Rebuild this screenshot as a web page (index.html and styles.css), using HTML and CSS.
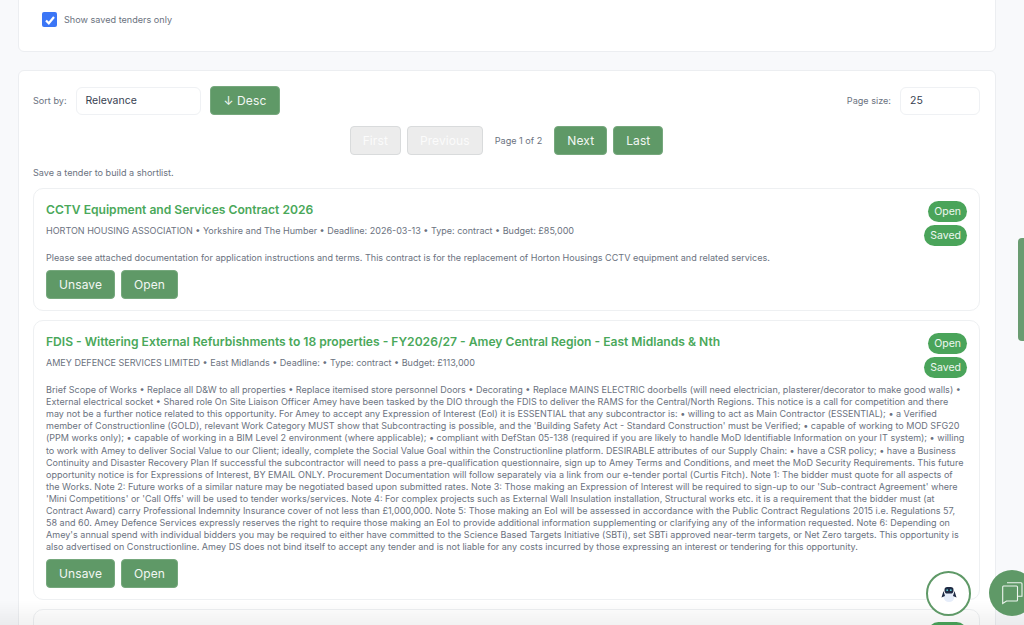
FILE: index.html
```html
<!DOCTYPE html>
<html lang="en">
<head>
    <meta charset="UTF-8">
    <meta name="viewport" content="width=device-width, initial-scale=1.0">
    <title>Tenders</title>
    <link rel="stylesheet" href="styles.css">
</head>
<body>
<div class="container">
    <div class="panel filter-panel">
        <label class="saved-only">
            <span class="checkbox">
                <svg width="12" height="12" viewBox="0 0 12 12"><path d="M2 6.500l2.800 2.800L10 3" fill="none" stroke="#fff" stroke-width="2.200"/></svg>
            </span>
            Show saved tenders only
        </label>
    </div>

    <div class="panel results-panel">
        <div class="sort-row">
            <div class="sort-left">
                <span class="field-label">Sort by:</span>
                <div class="select sort-select">Relevance</div>
                <button class="btn sort-btn">↓ Desc</button>
            </div>
            <div class="sort-right">
                <span class="field-label">Page size:</span>
                <div class="select size-select">25</div>
            </div>
        </div>

        <div class="pager">
            <button class="btn disabled">First</button>
            <button class="btn disabled">Previous</button>
            <span class="page-info">Page 1 of 2</span>
            <button class="btn">Next</button>
            <button class="btn">Last</button>
        </div>

        <p class="hint">Save a tender to build a shortlist.</p>

        <div class="tender-card">
            <div class="badges">
                <span class="badge">Open</span>
                <span class="badge">Saved</span>
            </div>
            <h3>CCTV Equipment and Services Contract 2026</h3>
            <p class="meta">HORTON HOUSING ASSOCIATION • Yorkshire and The Humber • Deadline: 2026-03-13 • Type: contract • Budget: £85,000</p>
            <p class="desc">Please see attached documentation for application instructions and terms. This contract is for the replacement of Horton Housings CCTV equipment and related services.</p>
            <div class="actions">
                <button class="btn">Unsave</button>
                <button class="btn">Open</button>
            </div>
        </div>

        <div class="tender-card">
            <div class="badges">
                <span class="badge">Open</span>
                <span class="badge">Saved</span>
            </div>
            <h3>FDIS - Wittering External Refurbishments to 18 properties - FY2026/27 - Amey Central Region - East Midlands &amp; Nth</h3>
            <p class="meta">AMEY DEFENCE SERVICES LIMITED • East Midlands • Deadline: • Type: contract • Budget: £113,000</p>
            <p class="desc">Brief Scope of Works • Replace all D&amp;W to all properties • Replace itemised store personnel Doors • Decorating • Replace MAINS ELECTRIC doorbells (will need electrician, plasterer/decorator to make good walls) • External electrical socket • Shared role On Site Liaison Officer Amey have been tasked by the DIO through the FDIS to deliver the RAMS for the Central/North Regions. This notice is a call for competition and there may not be a further notice related to this opportunity. For Amey to accept any Expression of Interest (EoI) it is ESSENTIAL that any subcontractor is: • willing to act as Main Contractor (ESSENTIAL); • a Verified member of Constructionline (GOLD), relevant Work Category MUST show that Subcontracting is possible, and the 'Building Safety Act - Standard Construction' must be Verified; • capable of working to MOD SFG20 (PPM works only); • capable of working in a BIM Level 2 environment (where applicable); • compliant with DefStan 05-138 (required if you are likely to handle MoD Identifiable Information on your IT system); • willing to work with Amey to deliver Social Value to our Client; ideally, complete the Social Value Goal within the Constructionline platform. DESIRABLE attributes of our Supply Chain: • have a CSR policy; • have a Business Continuity and Disaster Recovery Plan If successful the subcontractor will need to pass a pre-qualification questionnaire, sign up to Amey Terms and Conditions, and meet the MoD Security Requirements. This future opportunity notice is for Expressions of Interest, BY EMAIL ONLY. Procurement Documentation will follow separately via a link from our e-tender portal (Curtis Fitch). Note 1: The bidder must quote for all aspects of the Works. Note 2: Future works of a similar nature may be negotiated based upon submitted rates. Note 3: Those making an Expression of Interest will be required to sign-up to our 'Sub-contract Agreement' where 'Mini Competitions' or 'Call Offs' will be used to tender works/services. Note 4: For complex projects such as External Wall Insulation installation, Structural works etc. it is a requirement that the bidder must (at Contract Award) carry Professional Indemnity Insurance cover of not less than £1,000,000. Note 5: Those making an EoI will be assessed in accordance with the Public Contract Regulations 2015 i.e. Regulations 57, 58 and 60. Amey Defence Services expressly reserves the right to require those making an EoI to provide additional information supplementing or clarifying any of the information requested. Note 6: Depending on Amey's annual spend with individual bidders you may be required to either have committed to the Science Based Targets Initiative (SBTi), set SBTi approved near-term targets, or Net Zero targets. This opportunity is also advertised on Constructionline. Amey DS does not bind itself to accept any tender and is not liable for any costs incurred by those expressing an interest or tendering for this opportunity.</p>
            <div class="actions">
                <button class="btn">Unsave</button>
                <button class="btn">Open</button>
            </div>
        </div>

        <div class="tender-card next-card">
            <div class="badges">
                <span class="badge badge-cut"></span>
            </div>
        </div>
    </div>
</div>

<div class="side-tab"></div>
<div class="bottom-fade"></div>

<div class="bot-button">
    <svg width="18" height="18" viewBox="0 0 18 18">
        <ellipse cx="9" cy="11.500" rx="5.500" ry="5.500" fill="#e6edfa"/>
        <path d="M3.500 6L1.500 12.500l3.500-1.500zM14.500 6l2 6.500-3.500-1.500z" fill="#1f2a44"/>
        <rect x="4.500" y="2" width="9" height="6.500" rx="2.800" fill="#1f2a44"/>
        <circle cx="7.200" cy="5.200" r="0.900" fill="#5fd0d8"/>
        <circle cx="10.800" cy="5.200" r="0.900" fill="#5fd0d8"/>
    </svg>
</div>
<div class="chat-button">
    <svg width="24" height="24" viewBox="0 0 24 24" fill="none" stroke="#eef5ef" stroke-width="1.100">
        <path d="M3.500 5h13a1 1 0 0 1 1 1v13a1 1 0 0 1-1 1H6.500L2.700 22.500V6a1 1 0 0 1 .8-1z"/>
        <path d="M7 1.800h14a1 1 0 0 1 1 1v12.500h-4.500"/>
    </svg>
</div>
</body>
</html>
```

FILE: styles.css
```css
* {
    margin: 0;
    padding: 0;
    box-sizing: border-box;
    font-family: Inter, 'Noto Sans', sans-serif;
}

html, body {
    height: 625px;
    overflow: hidden;
}

body {
    background-color: #f8f9fb;
    color: #6b7280;
}

.container {
    height: 640px;
    padding: 0 28px 0 18px;
    margin-top: -15px;
    overflow: hidden;
}

.panel {
    background: white;
    border: 1px solid #eceef1;
    border-radius: 6px;
}

.filter-panel {
    height: 67px;
    padding: 26px 23px 0;
    margin-bottom: 18px;
}

.saved-only {
    display: flex;
    align-items: center;
    gap: 7px;
    font-size: 9.1px;
    color: #6b7280;
}

.checkbox {
    width: 15px;
    height: 15px;
    background: #3b76f6;
    border-radius: 2px;
    display: flex;
    align-items: center;
    justify-content: center;
}

.results-panel {
    height: 600px;
    padding: 15px 15px 0 14px;
}

.sort-row {
    display: flex;
    justify-content: space-between;
    align-items: center;
}

.sort-left, .sort-right {
    display: flex;
    align-items: center;
}

.field-label {
    font-size: 9.1px;
    color: #6b7280;
    margin-right: 9px;
}

.select {
    height: 28px;
    padding: 0 9px;
    line-height: 26px;
    background: white;
    border: 1px solid #eff1f4;
    border-radius: 6px;
    font-size: 10.500px;
    color: #374151;
}

.sort-select {
    width: 125px;
    margin-right: 9px;
}

.size-select {
    width: 80px;
}

.btn {
    height: 29px;
    padding: 0 12px;
    background: #5f9967;
    border: 1px solid #76a87d;
    border-radius: 4px;
    color: #f2f7f3;
    font-size: 12px;
    letter-spacing: 0.1px;
}

.btn.sort-btn {
    padding: 0 13px;
}

.btn.disabled {
    background: #ececec;
    border-color: #d9dbdc;
    color: #fbfbfb;
}

.pager {
    display: flex;
    justify-content: center;
    align-items: center;
    gap: 6px;
    margin-top: 11px;
}

.page-info {
    font-size: 9.1px;
    color: #6b7280;
    margin: 0 6px;
}

.hint {
    font-size: 9.1px;
    color: #6b7280;
    margin: 12px 0 10px;
}

.tender-card {
    position: relative;
    background: white;
    border: 1px solid #eef0f2;
    border-radius: 10px;
    padding: 12px 12px 11px;
    margin-bottom: 9px;
}

.badges {
    float: right;
    display: flex;
    flex-direction: column;
    align-items: flex-end;
    gap: 3px;
}

.badge {
    background: #4aa45a;
    color: #eef7f0;
    font-size: 10.500px;
    line-height: 21px;
    padding: 0 6px;
    border-radius: 11px;
}

.badge-cut {
    width: 39px;
    height: 21px;
}

.next-card {
    height: 40px;
}

h3 {
    font-size: 12.100px;
    font-weight: 600;
    line-height: 16px;
    padding-top: 1px;
    color: #4aa85a;
}

.meta {
    font-size: 9.03px;
    line-height: 12px;
    color: #6b7280;
    margin-top: 7px;
}

.desc {
    font-size: 9.04px;
    line-height: 12.100px;
    color: #6b7280;
    margin-top: 15px;
}

.actions {
    display: flex;
    gap: 6px;
    margin-top: 6px;
}

.side-tab {
    position: fixed;
    right: 0;
    top: 238px;
    width: 6px;
    height: 103px;
    background: #6a9c71;
    border-radius: 4px 0 0 4px;
}

.bottom-fade {
    position: fixed;
    left: 0;
    right: 0;
    bottom: 0;
    height: 25px;
    background: linear-gradient(rgba(0, 0, 0, 0), rgba(0, 0, 0, 0.05));
}

.bot-button {
    position: fixed;
    left: 926px;
    top: 571px;
    width: 45px;
    height: 45px;
    background: white;
    border: 2px solid #5f9967;
    border-radius: 50%;
    display: flex;
    align-items: center;
    justify-content: center;
}

.chat-button {
    position: fixed;
    left: 989px;
    top: 570px;
    width: 46px;
    height: 46px;
    background: #5f9967;
    border-radius: 50%;
    display: flex;
    align-items: center;
    padding-left: 11px;
}
```
